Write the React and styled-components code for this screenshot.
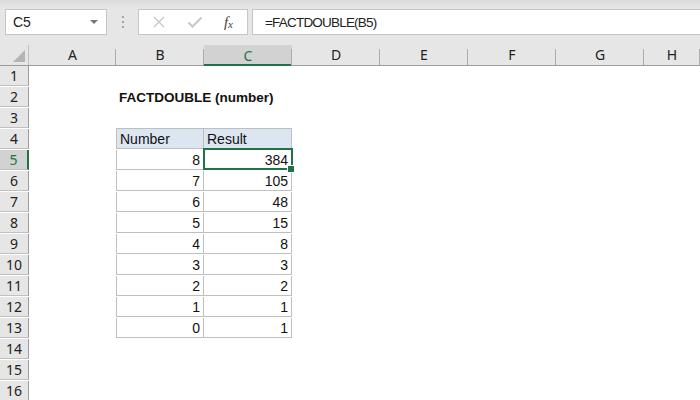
import React from 'react';
import styled, { createGlobalStyle } from 'styled-components';

const GlobalStyle = createGlobalStyle`
  html, body {
    margin: 0;
    padding: 0;
    background: #ffffff;
    overflow: hidden;
  }
  body {
    font-family: "Liberation Sans", Arial, sans-serif;
  }
`;

const GREEN = '#217346';
const COLS = ['A', 'B', 'C', 'D', 'E', 'F', 'G', 'H'];
const GRID = '29px 87px 88px 88px 88px 88px 88px 88px 1fr';

const data = [
  [8, 384],
  [7, 105],
  [6, 48],
  [5, 15],
  [4, 8],
  [3, 3],
  [2, 2],
  [1, 1],
  [0, 1],
];

function App() {
  const rows = [];
  for (let r = 1; r <= 16; r++) {
    const cells = [];
    cells.push(
      <RowHead key="h" $active={r === 5}>{r}</RowHead>
    );
    COLS.forEach((c) => {
      let content = null;
      let props = {};
      if (r === 2 && c === 'B') {
        content = <Title>FACTDOUBLE (number)</Title>;
      }
      if (r === 4 && (c === 'B' || c === 'C')) {
        content = c === 'B' ? 'Number' : 'Result';
        props = { $table: true, $head: true, $top: true, $left: c === 'B' };
      }
      if (r >= 5 && r <= 13 && (c === 'B' || c === 'C')) {
        const row = data[r - 5];
        content = c === 'B' ? row[0] : row[1];
        props = { $table: true, $num: true, $left: c === 'B', $selected: r === 5 && c === 'C' };
      }
      cells.push(
        <Cell key={c} {...props}>
          {content}
          {props.$selected && <FillHandle />}
        </Cell>
      );
    });
    cells.push(<Cell key="rest" />);
    rows.push(<Row key={r}>{cells}</Row>);
  }

  return (
    <>
      <GlobalStyle />
      <Window>
        <Toolbar>
          <NameBox>
            <span>C5</span>
            <DropArrow />
          </NameBox>
          <Grip>
            <i /><i /><i />
          </Grip>
          <FxBox>
            <svg width="14" height="14" viewBox="0 0 14 14">
              <path d="M2 2 L12 12 M12 2 L2 12" stroke="#c8c8c8" strokeWidth="1.4" fill="none" />
            </svg>
            <svg width="16" height="14" viewBox="0 0 16 14">
              <path d="M1.5 7.5 L5.5 11.5 L14.5 2.5" stroke="#c8c8c8" strokeWidth="2" fill="none" />
            </svg>
            <Fx>f<sub>x</sub></Fx>
          </FxBox>
          <FormulaInput>=FACTDOUBLE(B5)</FormulaInput>
        </Toolbar>
        <Sheet>
          <HeaderRow>
            <Corner>
              <svg width="12" height="12" viewBox="0 0 12 12">
                <polygon points="12,0 12,12 0,12" fill="#b4b4b4" />
              </svg>
            </Corner>
            {COLS.map((c) => (
              <ColHead key={c} $active={c === 'C'}>{c}</ColHead>
            ))}
            <ColHead $last />
          </HeaderRow>
          {rows}
        </Sheet>
      </Window>
    </>
  );
}

const Window = styled.div`
  width: 700px;
  height: 400px;
  overflow: hidden;
  display: flex;
  flex-direction: column;
  background: #fff;
`;

const Toolbar = styled.div`
  height: 45px;
  flex-shrink: 0;
  box-sizing: border-box;
  background: linear-gradient(#dcdcdc 0px, #e6e6e6 8px, #e6e6e6 100%);
  display: flex;
  align-items: flex-start;
  padding: 9px 0 0 5px;
`;

const NameBox = styled.div`
  width: 102px;
  height: 26px;
  box-sizing: border-box;
  background: #fff;
  border: 1px solid #c6c6c6;
  display: flex;
  align-items: center;
  justify-content: space-between;
  padding: 0 8px 0 7px;
  font-size: 14px;
  color: #222;
`;

const DropArrow = styled.div`
  width: 0;
  height: 0;
  border-left: 4px solid transparent;
  border-right: 4px solid transparent;
  border-top: 4px solid #777;
`;

const Grip = styled.div`
  width: 31px;
  height: 26px;
  display: flex;
  flex-direction: column;
  align-items: center;
  justify-content: center;
  gap: 3px;
  i {
    display: block;
    width: 2px;
    height: 2px;
    background: #a6a6a6;
  }
`;

const FxBox = styled.div`
  width: 110px;
  height: 26px;
  box-sizing: border-box;
  background: #fff;
  border: 1px solid #c6c6c6;
  display: flex;
  align-items: center;
  justify-content: space-between;
  padding: 0 14px 0 13px;
`;

const Fx = styled.span`
  font-family: "Liberation Serif", "Times New Roman", serif;
  font-style: italic;
  font-size: 15px;
  color: #444;
  sub {
    font-size: 11px;
    vertical-align: baseline;
    position: relative;
    top: 1px;
  }
`;

const FormulaInput = styled.div`
  flex: 1;
  margin-left: 4px;
  height: 26px;
  box-sizing: border-box;
  background: #fff;
  border: 1px solid #c6c6c6;
  border-right: none;
  display: flex;
  align-items: center;
  padding-left: 12px;
  font-size: 13.5px;
  letter-spacing: -0.8px;
  color: #222;
`;

const Sheet = styled.div`
  flex: 1;
  display: flex;
  flex-direction: column;
`;

const HeaderRow = styled.div`
  display: grid;
  grid-template-columns: ${GRID};
  height: 21px;
  flex-shrink: 0;
  box-sizing: border-box;
  background: #e6e6e6;
  border-bottom: 1px solid #9c9c9c;
`;

const Corner = styled.div`
  border-right: 1px solid #c0c0c0;
  display: flex;
  align-items: flex-end;
  justify-content: flex-end;
  padding: 0 3px 3px 0;
`;

const ColHead = styled.div`
  position: relative;
  display: flex;
  align-items: center;
  justify-content: center;
  font-family: "Noto Sans", "Open Sans", sans-serif;
  font-size: 14px;
  color: ${(p) => (p.$active ? GREEN : '#222')};
  background: ${(p) => (p.$active ? '#d2d2d2' : 'transparent')};
  box-shadow: ${(p) => (p.$active ? `inset 0 -2px 0 ${GREEN}` : 'none')};
  margin-bottom: ${(p) => (p.$active ? '-1px' : '0')};
  &::after {
    content: '';
    position: absolute;
    right: 0;
    top: 4px;
    bottom: 0;
    width: 1px;
    background: ${(p) => (p.$last ? 'transparent' : '#ababab')};
  }
`;

const Row = styled.div`
  display: grid;
  grid-template-columns: ${GRID};
  height: 21px;
  flex-shrink: 0;
`;

const RowHead = styled.div`
  box-sizing: border-box;
  background: ${(p) => (p.$active ? '#d2d2d2' : '#e6e6e6')};
  color: ${(p) => (p.$active ? GREEN : '#222')};
  border-bottom: 1px solid #c0c0c0;
  border-right: ${(p) => (p.$active ? `2px solid ${GREEN}` : '1px solid #9c9c9c')};
  display: flex;
  align-items: center;
  justify-content: center;
  font-family: "Noto Sans", "Open Sans", sans-serif;
  font-size: 14px;
`;

const Cell = styled.div`
  position: relative;
  box-sizing: border-box;
  display: flex;
  align-items: flex-end;
  justify-content: ${(p) => (p.$num ? 'flex-end' : 'flex-start')};
  padding: 0 3px 1px 3px;
  font-size: 14px;
  color: #111;
  white-space: nowrap;
  background: ${(p) => (p.$head ? '#dce6f1' : 'transparent')};
  border-right: ${(p) => (p.$table ? '1px solid #bfbfbf' : 'none')};
  border-bottom: ${(p) => (p.$table ? '1px solid #bfbfbf' : 'none')};
  border-left: ${(p) => (p.$left ? '1px solid #bfbfbf' : 'none')};
  border-top: ${(p) => (p.$top ? '1px solid #bfbfbf' : 'none')};
  margin-top: ${(p) => (p.$top ? '-1px' : '0')};
  &::after {
    content: '';
    display: ${(p) => (p.$selected ? 'block' : 'none')};
    position: absolute;
    left: -1px;
    top: -2px;
    right: -2px;
    bottom: -1px;
    border: 2px solid ${GREEN};
    pointer-events: none;
  }
`;

const FillHandle = styled.div`
  position: absolute;
  right: -4px;
  bottom: -4px;
  width: 6px;
  height: 6px;
  background: ${GREEN};
  border: 1px solid #fff;
  z-index: 2;
`;

const Title = styled.span`
  font-weight: bold;
  font-size: 13.5px;
  padding-bottom: 1px;
`;

export default App;
